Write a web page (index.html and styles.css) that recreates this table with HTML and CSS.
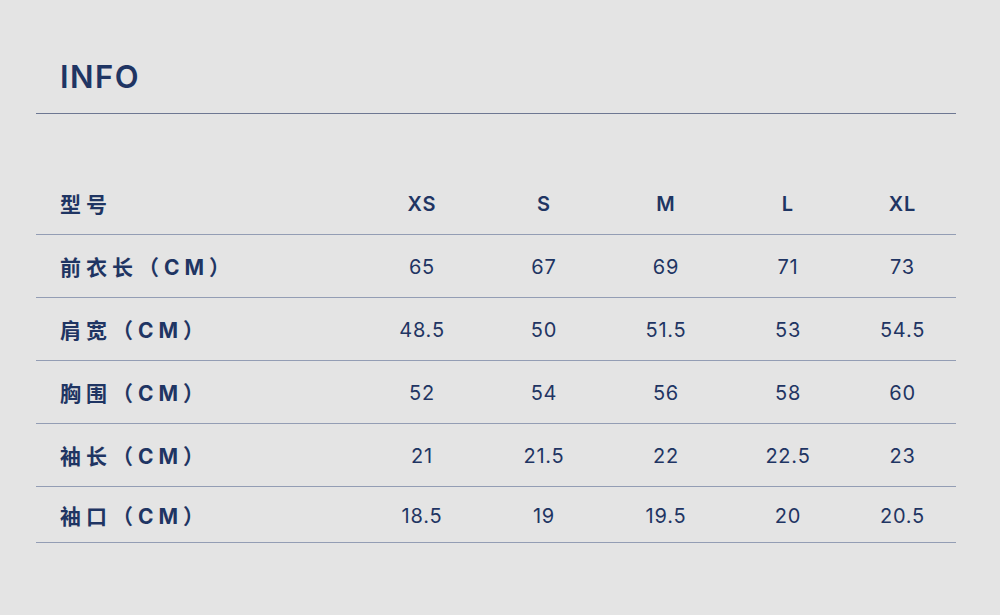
FILE: index.html
```html
<!DOCTYPE html>
<html lang="zh">
<head>
<meta charset="utf-8">
<title>INFO</title>
<link rel="stylesheet" href="styles.css">
</head>
<body>
<div class="page">
  <header class="head">
    <h1 class="title">INFO</h1>
  </header>
  <div class="table">
    <div class="row row-head">
      <div class="label">型号</div>
      <div class="cell">XS</div>
      <div class="cell">S</div>
      <div class="cell">M</div>
      <div class="cell">L</div>
      <div class="cell">XL</div>
    </div>
    <div class="row">
      <div class="label">前衣长（CM）</div>
      <div class="cell">65</div>
      <div class="cell">67</div>
      <div class="cell">69</div>
      <div class="cell">71</div>
      <div class="cell">73</div>
    </div>
    <div class="row">
      <div class="label">肩宽（CM）</div>
      <div class="cell">48.5</div>
      <div class="cell">50</div>
      <div class="cell">51.5</div>
      <div class="cell">53</div>
      <div class="cell">54.5</div>
    </div>
    <div class="row">
      <div class="label">胸围（CM）</div>
      <div class="cell">52</div>
      <div class="cell">54</div>
      <div class="cell">56</div>
      <div class="cell">58</div>
      <div class="cell">60</div>
    </div>
    <div class="row">
      <div class="label">袖长（CM）</div>
      <div class="cell">21</div>
      <div class="cell">21.5</div>
      <div class="cell">22</div>
      <div class="cell">22.5</div>
      <div class="cell">23</div>
    </div>
    <div class="row row-last">
      <div class="label">袖口（CM）</div>
      <div class="cell">18.5</div>
      <div class="cell">19</div>
      <div class="cell">19.5</div>
      <div class="cell">20</div>
      <div class="cell">20.5</div>
    </div>
  </div>
</div>
</body>
</html>
```
FILE: styles.css
```css
html, body {
  margin: 0;
  padding: 0;
  background: #e4e4e4;
}
body {
  width: 1000px;
  height: 615px;
  overflow: hidden;
  color: #1f3563;
  font-family: "Inter", "Noto Sans", "Noto Sans CJK SC", sans-serif;
}
.page {
  padding: 0 44px 0 36px;
}
.head {
  height: 113px;
  border-bottom: 1px solid #6d7792;
  box-sizing: content-box;
}
.title {
  margin: 0;
  padding: 57px 0 0 24px;
  font-size: 31px;
  line-height: 40px;
  font-weight: 600;
  letter-spacing: 1.5px;
}
.table {
  margin-top: 58px;
}
.row {
  display: grid;
  grid-template-columns: 325px repeat(4, 122px) 1fr;
  align-items: center;
  height: 63px;
  box-sizing: border-box;
  border-bottom: 1px solid #939db4;
}
.row-last {
  height: 56px;
}
.label {
  padding-left: 24px;
  font-family: "Inter", "Noto Sans CJK SC", sans-serif;
  font-size: 21px;
  font-weight: 700;
  letter-spacing: 5px;
  white-space: nowrap;
}
.cell {
  padding-top: 2px;
  text-align: center;
  font-size: 20px;
  font-weight: 400;
  letter-spacing: 0.8px;
}
.row-head .cell {
  font-weight: 600;
  letter-spacing: 1px;
}
```
